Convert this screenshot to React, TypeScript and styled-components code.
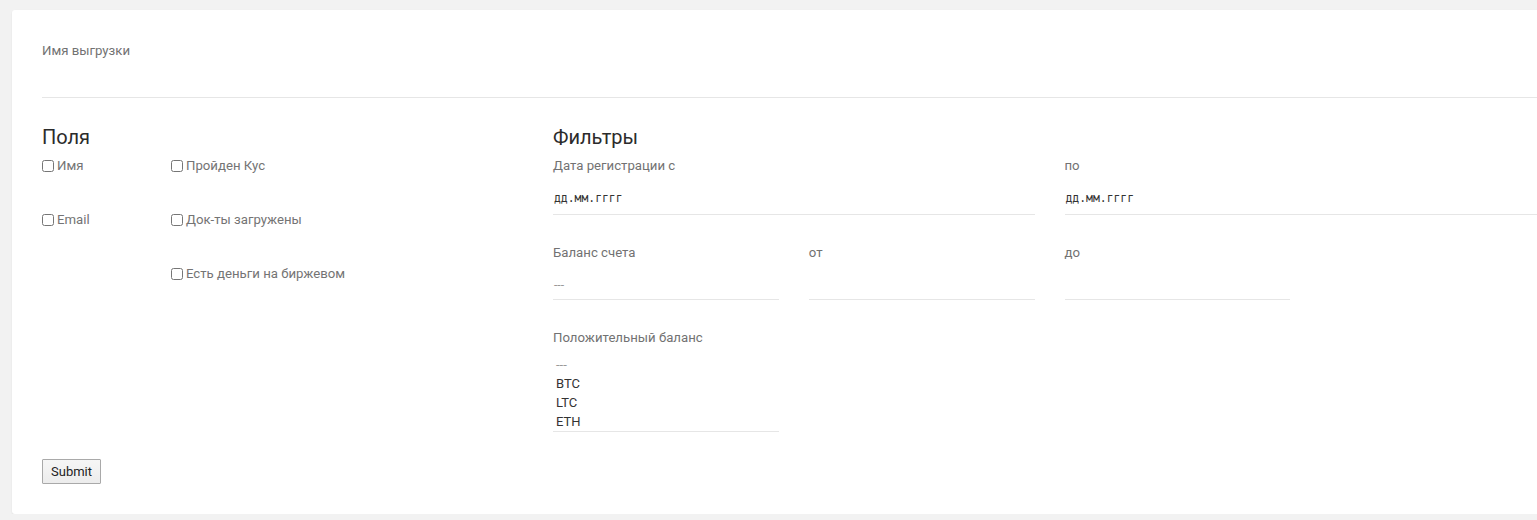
import React from "react";
import styled, { createGlobalStyle } from "styled-components";

const Global = createGlobalStyle`
  html, body {
    margin: 0;
    padding: 0;
    background: #f2f2f2;
    overflow: hidden;
    font-family: Roboto, "Liberation Sans", Arial, sans-serif;
  }
`;

const Page = styled.div`
  padding: 10px 0 0 12px;
  width: 1600px;
`;

const Card = styled.form`
  width: 1565px;
  box-sizing: border-box;
  background: #fff;
  border-radius: 3px;
  box-shadow: 0 1px 2px rgba(0, 0, 0, 0.08);
  padding: 30px;
`;

const Label = styled.div`
  font-size: 13.2px;
  line-height: 20px;
  color: #727272;
  height: 20px;
  padding-top: 1px;
  box-sizing: border-box;
`;

const LineInput = styled.div<{ $h?: number; $mt?: number }>`
  box-sizing: border-box;
  height: ${(p) => p.$h ?? 35}px;
  margin-top: ${(p) => p.$mt ?? 5}px;
  border-bottom: 1px solid #e6e6e6;
  display: flex;
  align-items: center;
  padding: 0 1px;
`;

const DateText = styled.span`
  font-family: "DejaVu Sans Mono", "Liberation Mono", monospace;
  font-size: 11.4px;
  color: #333;
  padding-top: 2px;
`;

const Dashes = styled.span`
  font-size: 12px;
  color: #999;
  padding-top: 4px;
`;

const Section = styled.div`
  display: grid;
  grid-template-columns: 481px 993px;
  column-gap: 30px;
  margin-top: 27px;
`;

const Heading = styled.h2`
  margin: 0 0 6px;
  font-size: 20px;
  line-height: 24px;
  font-weight: 400;
  color: #2b2b2b;
`;

const CheckGrid = styled.div`
  display: grid;
  grid-template-columns: 129px 129px;
`;

const CheckCol = styled.div`
  display: flex;
  flex-direction: column;
  gap: 34px;
`;

const CheckLabel = styled.label`
  display: flex;
  align-items: center;
  height: 20px;
  padding-top: 1px;
  box-sizing: border-box;
  font-size: 13.2px;
  color: #747474;
  white-space: nowrap;
`;

const Box = styled.input`
  width: 12px;
  height: 12px;
  margin: 0 3px 0 0;
  accent-color: #777;
`;

const FilterGrid = styled.div<{ $cols: number }>`
  display: grid;
  grid-template-columns: repeat(${(p) => p.$cols}, 1fr);
  column-gap: 30px;
  margin-bottom: 27px;
`;

const Field = styled.div``;

const OptionList = styled.div`
  box-sizing: border-box;
  margin-top: 5px;
  padding: 3px 3px 0;
  height: 80px;
  border-bottom: 1px solid #e6e6e6;
`;

const Option = styled.div<{ $muted?: boolean }>`
  font-size: 13px;
  line-height: 19px;
  height: 19px;
  color: ${(p) => (p.$muted ? "#999" : "#333")};
`;

const SubmitButton = styled.button`
  height: 25px;
  width: 59px;
  padding: 0;
  font-family: Roboto, "Liberation Sans", Arial, sans-serif;
  font-size: 13px;
  color: #222;
  background: linear-gradient(#f6f6f6, #ececec);
  border: 1px solid #a9a9a9;
  border-radius: 1px;
`;

export default function App() {
  return (
    <>
      <Global />
      <Page>
        <Card onSubmit={(e) => e.preventDefault()}>
          <Field>
            <Label>Имя выгрузки</Label>
            <LineInput $h={38} $mt={0} />
          </Field>
          <Section>
            <div>
              <Heading>Поля</Heading>
              <CheckGrid>
                <CheckCol>
                  <CheckLabel>
                    <Box type="checkbox" />
                    Имя
                  </CheckLabel>
                  <CheckLabel>
                    <Box type="checkbox" />
                    Email
                  </CheckLabel>
                </CheckCol>
                <CheckCol>
                  <CheckLabel>
                    <Box type="checkbox" />
                    Пройден Кус
                  </CheckLabel>
                  <CheckLabel>
                    <Box type="checkbox" />
                    Док-ты загружены
                  </CheckLabel>
                  <CheckLabel>
                    <Box type="checkbox" />
                    Есть деньги на биржевом
                  </CheckLabel>
                </CheckCol>
              </CheckGrid>
            </div>
            <div>
              <Heading>Фильтры</Heading>
              <FilterGrid $cols={2}>
                <Field>
                  <Label>Дата регистрации с</Label>
                  <LineInput>
                    <DateText>дд.мм.гггг</DateText>
                  </LineInput>
                </Field>
                <Field>
                  <Label>по</Label>
                  <LineInput>
                    <DateText>дд.мм.гггг</DateText>
                  </LineInput>
                </Field>
              </FilterGrid>
              <FilterGrid $cols={4}>
                <Field>
                  <Label>Баланс счета</Label>
                  <LineInput $h={33}>
                    <Dashes>---</Dashes>
                  </LineInput>
                </Field>
                <Field>
                  <Label>от</Label>
                  <LineInput $h={33} />
                </Field>
                <Field>
                  <Label>до</Label>
                  <LineInput $h={33} />
                </Field>
              </FilterGrid>
              <FilterGrid $cols={4}>
                <Field>
                  <Label>Положительный баланс</Label>
                  <OptionList>
                    <Option $muted>---</Option>
                    <Option>BTC</Option>
                    <Option>LTC</Option>
                    <Option>ETH</Option>
                  </OptionList>
                </Field>
              </FilterGrid>
            </div>
          </Section>
          <SubmitButton type="submit">Submit</SubmitButton>
        </Card>
      </Page>
    </>
  );
}
